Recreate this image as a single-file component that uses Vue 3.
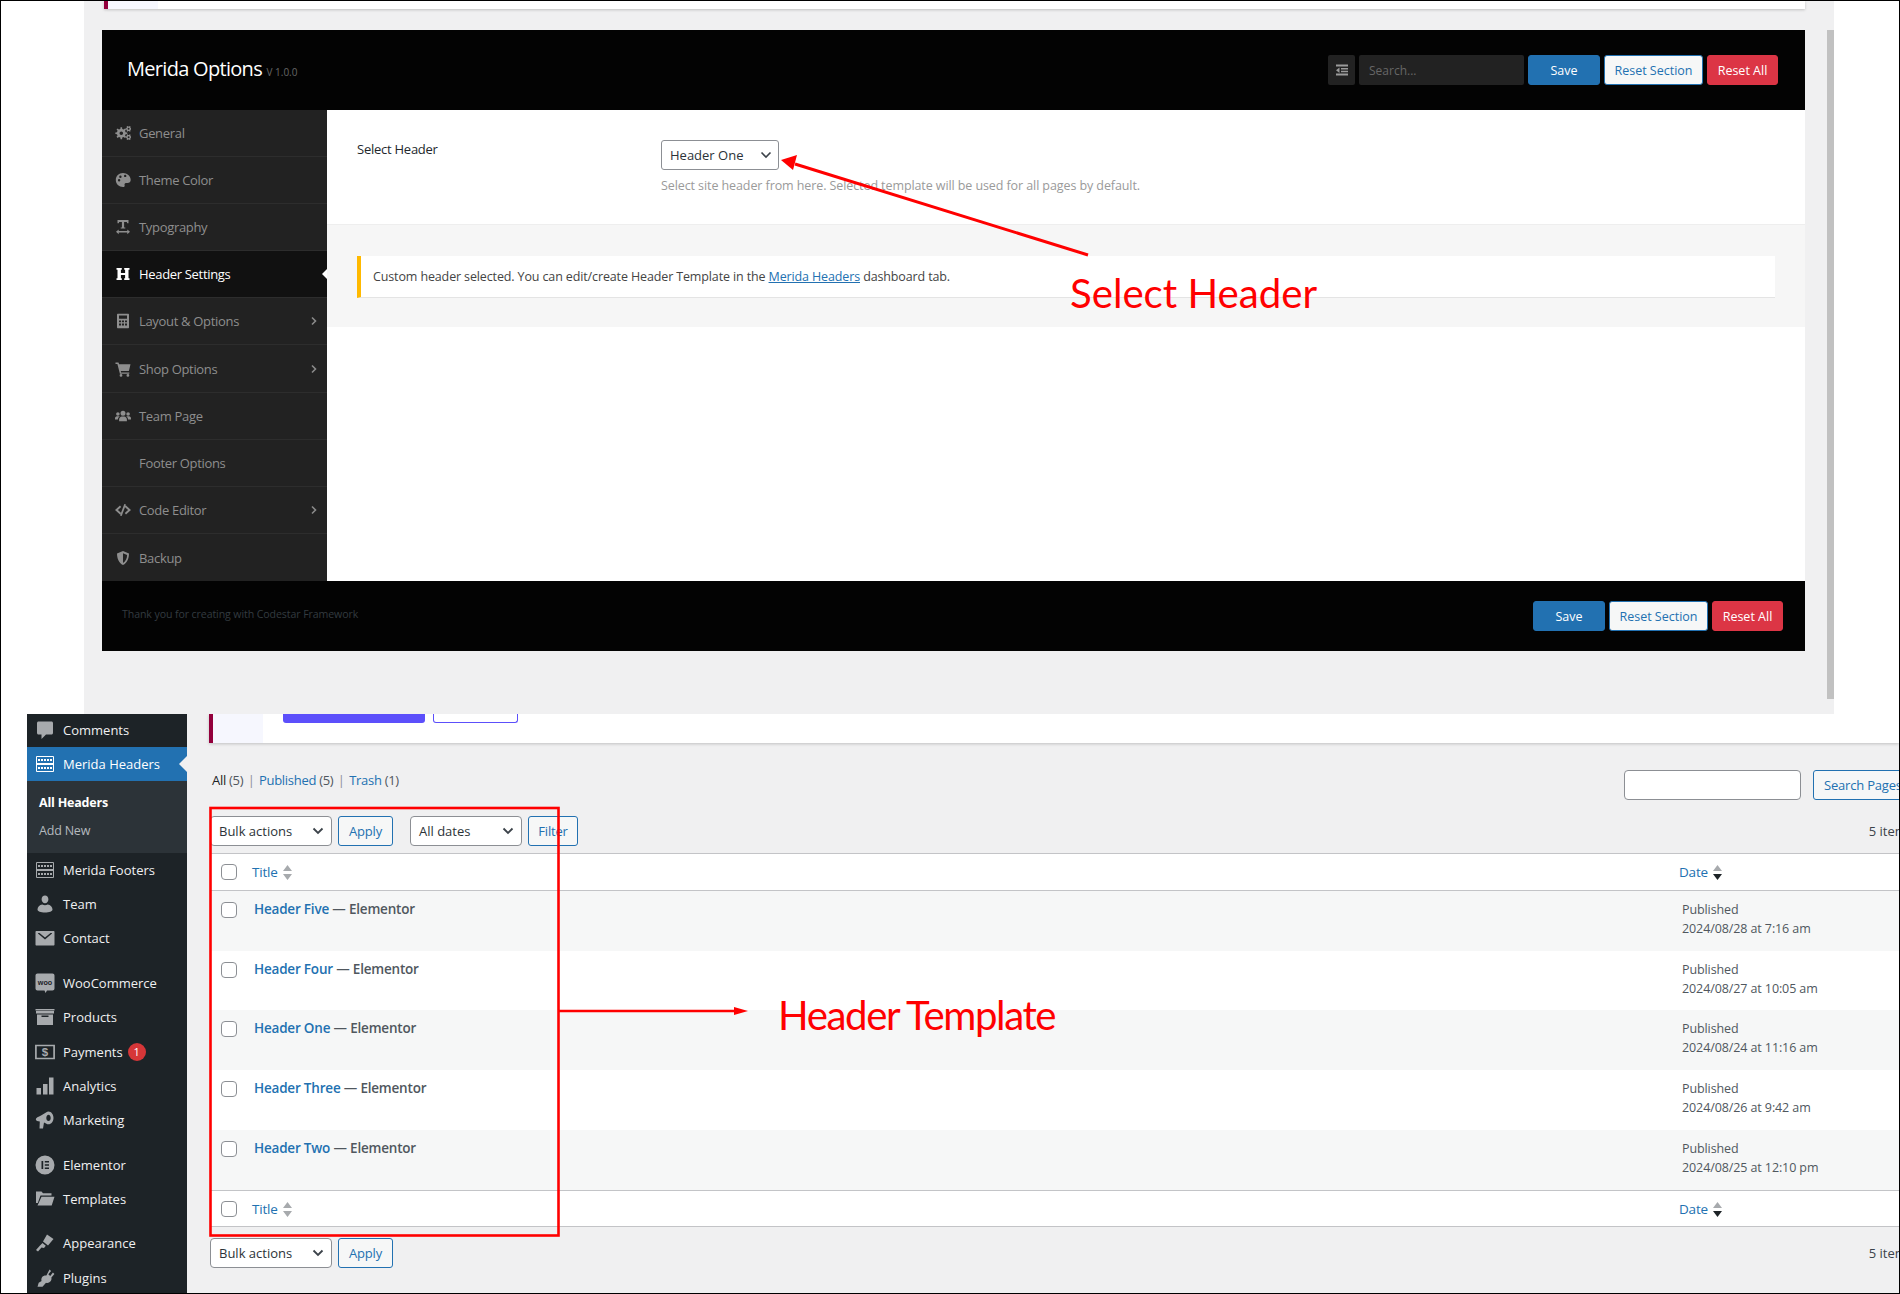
<script setup>
function gear(cx, cy, ro, ri, hole, n) {
  let d = ''
  for (let i = 0; i < n; i++) {
    const step = (Math.PI * 2) / n
    const a = i * step
    const pts = [[ri, a - step * 0.5], [ri, a - step * 0.27], [ro, a - step * 0.17], [ro, a + step * 0.17], [ri, a + step * 0.27]]
    for (const [r, t] of pts) {
      d += (d === '' ? 'M' : 'L') + (cx + r * Math.cos(t)).toFixed(2) + ' ' + (cy + r * Math.sin(t)).toFixed(2)
    }
  }
  d += `ZM${cx + hole} ${cy}a${hole} ${hole} 0 1 0 ${-2 * hole} 0a${hole} ${hole} 0 1 0 ${2 * hole} 0Z`
  return d
}
const p = (d) => `<path fill="currentColor" fill-rule="evenodd" d="${d}"/>`
const grid = `<path fill="none" stroke="currentColor" stroke-width="1" d="M1.500 2.500h17v15h-17z"/><path fill="none" stroke="currentColor" stroke-width="2" d="M1.500 10h17"/><path fill="none" stroke="currentColor" stroke-width="2" stroke-dasharray="2 1" d="M3 6h14.500M3 14h14.500"/>`

const panelIcons = {
  cogs: p(gear(6.3, 8.2, 6, 4.4, 1.8, 8)) + p(gear(13.6, 3.8, 3.1, 2.3, 0.95, 6)) + p(gear(13.6, 12.2, 3.1, 2.3, 0.95, 6)),
  palette: p('M8 1C3.800 1 .8 4.100 .8 8s3.100 7 7.300 7c1.300 0 1.900-1 1.500-2.100-.4-1 .3-2 1.300-2h1.700c1.700 0 3.100-1.300 3.100-3C15.700 4 12.100 1 8 1zM4.100 9.400a1.200 1.200 0 1 1 0-2.400 1.200 1.200 0 0 1 0 2.400zM5.400 5.900a1.200 1.200 0 1 1 0-2.400 1.200 1.200 0 0 1 0 2.400zm4.800-.8a1.200 1.200 0 1 1 0-2.400 1.200 1.200 0 0 1 0 2.400z'),
  type: p('M2.500 1h11v3.300h-1.300l-.4-1.400H9.100v5.500h1.200v1.200H5.700V8.400h1.200V2.900H4.200l-.4 1.400H2.500zM1 12.800l2.700-2.400v1.600h8.600v-1.600l2.700 2.400-2.700 2.400V13.600H3.700v1.600z'),
  head: p('M1.500 2h5.300v1.800H5.900v3.200h4.200V3.800h-.9V2h5.300v1.800h-1V12.200h1V14H9.200v-1.800h.9V8.900H5.900v3.300h.9V14H1.500v-1.800h1V3.800h-1z'),
  calc: p('M3 .8h10c.6 0 1 .4 1 1v12.400c0 .6-.4 1-1 1H3c-.6 0-1-.4-1-1V1.800c0-.6.4-1 1-1zM4 2.500v3.300h8V2.500zM4 7.400v1.900h2.100V7.400zm3 0v1.900h2V7.400zm3 0v1.900h2V7.400zM4 10.600v1.900h2.100v-1.900zm3 0v1.900h2v-1.900zm3 0v1.900h2v-1.900z'),
  cart: p('M.5 1.500h3l.6 1.800h11.400l-1.600 6.800H5.800l.3 1.300h8.200v1.400H4.900L2.400 2.900H.5zM6 13a1.400 1.400 0 1 1 0 2.800A1.400 1.400 0 0 1 6 13zm6.900 0a1.400 1.400 0 1 1 0 2.800 1.400 1.400 0 0 1 0-2.800z'),
  users: p('M8 2.800a2.500 2.500 0 1 1 0 5 2.500 2.500 0 0 1 0-5zM2.900 4.200a1.800 1.800 0 1 1 0 3.600 1.800 1.800 0 0 1 0-3.600zm10.200 0a1.800 1.800 0 1 1 0 3.600 1.800 1.800 0 0 1 0-3.600zM4.100 13.300v-1.800c0-1.800 1.400-3.100 2.700-3.100h2.400c1.300 0 2.700 1.300 2.700 3.100v1.800zM0 10.600C0 9.200.8 8.300 2 8.300h2c.2 0 .5.100.7.200-1.100.6-1.700 1.700-1.800 3H0zM16 10.600c0-1.400-.8-2.300-2-2.300h-2c-.2 0-.5.100-.7.200 1.100.6 1.700 1.700 1.800 3H16z'),
  code: p('M5 3.600L0 8l5 4.400 1.200-1.400L2.900 8 6.200 5zM11 3.600L16 8l-5 4.400L9.800 11l3.300-3-3.300-3zM9.300 2l1.700.4L6.700 14 5 13.600z'),
  shield: p('M8 1l6 2.400c0 5-1.800 9.300-6 11.600C3.800 12.700 2 8.400 2 3.400zM8 3.200v9.700c2.800-1.800 4-4.600 4.100-8z'),
}
const sideItems = [
  { name: 'General', icon: 'cogs' },
  { name: 'Theme Color', icon: 'palette' },
  { name: 'Typography', icon: 'type' },
  { name: 'Header Settings', icon: 'head', active: true },
  { name: 'Layout & Options', icon: 'calc', more: true },
  { name: 'Shop Options', icon: 'cart', more: true },
  { name: 'Team Page', icon: 'users' },
  { name: 'Footer Options', icon: '' },
  { name: 'Code Editor', icon: 'code', more: true },
  { name: 'Backup', icon: 'shield' },
]
const wpIcons = {
  comments: p('M3.500 1.500h13c.8 0 1.500.7 1.500 1.500v10c0 .8-.7 1.500-1.500 1.500H11l-4.500 4.500v-4.500h-3C2.700 14.500 2 13.800 2 13V3c0-.8.7-1.500 1.500-1.500z'),
  grid,
  team: p('M10 1.500c2 0 3.400 1.700 3.400 3.800s-1.400 4-3.400 4-3.400-1.900-3.400-4S8 1.500 10 1.500zM2.500 15.500c0-2.700 2-4.500 4.800-5 1.700.9 3.700.9 5.400 0 2.800.5 4.800 2.300 4.800 5 0 2-3.200 3-7.500 3s-7.500-1-7.500-3z'),
  mail: p('M1.500 3h17c.6 0 1 .4 1 1v12.500c0 .6-.4 1-1 1h-17c-.6 0-1-.4-1-1V4c0-.6.4-1 1-1zM3 5.500l7 6 7-6v-.5h-1.500L10 9.500 4.500 5H3z'),
  woo: `<path fill="currentColor" d="M2.500 .5h15c1.100 0 2 .9 2 2v13c0 1.100-.9 2-2 2H12l-1.500 2.500-1-2.500h-7c-1.100 0-2-.9-2-2v-13c0-1.100.9-2 2-2z"/><text x="10" y="11.800" text-anchor="middle" font-family="Liberation Sans, sans-serif" font-weight="700" font-size="7.200" fill="#1d2327">woo</text>`,
  box: p('M.5 2h19v1.500H.5zM1 4h18v2.500H1zM2 7.500h16V18H2zM6.500 8.500v1.500h7V8.500z'),
  pay: `<path fill="none" stroke="currentColor" stroke-width="1.700" d="M.9 3.500h18.200v13H.9z"/><text x="10" y="14.300" text-anchor="middle" font-family="Liberation Sans, sans-serif" font-weight="700" font-size="11.500" fill="currentColor">$</text>`,
  bars: p('M1.500 12h4.500v6.500H1.500zM8 8h4.500v10.500H8zM14 1.500h4.500v17H14z'),
  mega: p('M13.500 1.500c2.700 0 5 2.900 5 6.400s-2.300 6.300-5 6.300c-.8 0-1.600-.2-2.500-.8l-2 -1L8 18.500H4.500l.3-6.900C2.900 11.400.8 10.800.8 9.500c0-1.500 2.600-2.700 5.200-3.900L11 2.500c.9-.7 1.700-1 2.500-1zM13.500 4.800c-1.200 0-2.200 1.400-2.200 3.100s1 3.100 2.200 3.100 2.200-1.400 2.200-3.100-1-3.100-2.200-3.100z'),
  el: p('M10 .5a9.500 9.500 0 1 1 0 19 9.500 9.500 0 0 1 0-19zM6.500 6v8h1.700V6zM9.800 6v1.600h4.200V6zm0 3.200v1.600h4.200V9.200zm0 3.200V14h4.200v-1.600z'),
  folder: p('M1 2.500h5.500L8 4.300h8.500v2.200H5.500L2.800 14H1zM6.500 7.700h13l-2.800 8.800H2.500z'),
  brush: p('M12 1.500l6.500 4.500-5.500 6.500L8 8.500zM7.500 10l3.300 2.700L9 15l-2.500-.5L3 18.500 1 17l4-4.500z'),
  plug: p('M14.500 1.500l1.600 1.400-2.800 3.400 1.900 1.600 2.700-3.300 1.500 1.300-3 3.700c.3 1.600-.2 3-1.100 4-1 1.200-2.700 1.700-4.300 1.100L7.500 18.800H2.500l1.200-4 2.900-1.700c-.6-1.500-.2-3.100.8-4.300.8-1 2.200-1.600 4-1.300z'),
}
const wpTail = [
  { name: 'Merida Footers', icon: 'grid' },
  { name: 'Team', icon: 'team' },
  { name: 'Contact', icon: 'mail', gap: true },
  { name: 'WooCommerce', icon: 'woo' },
  { name: 'Products', icon: 'box' },
  { name: 'Payments', icon: 'pay', badge: '1' },
  { name: 'Analytics', icon: 'bars' },
  { name: 'Marketing', icon: 'mega', gap: true },
  { name: 'Elementor', icon: 'el' },
  { name: 'Templates', icon: 'folder', gap: true },
  { name: 'Appearance', icon: 'brush' },
  { name: 'Plugins', icon: 'plug' },
]
const rows = [
  { t: 'Header Five', d: '2024/08/28 at 7:16 am' },
  { t: 'Header Four', d: '2024/08/27 at 10:05 am' },
  { t: 'Header One', d: '2024/08/24 at 11:16 am' },
  { t: 'Header Three', d: '2024/08/26 at 9:42 am' },
  { t: 'Header Two', d: '2024/08/25 at 12:10 pm' },
]
</script>

<template>
  <div class="page">
    <section class="shot-top">
      <div class="gutter-top"></div>
      <div class="top-gray">
        <div class="top-main">
          <div class="strip"><i class="stripe"></i><i class="stripe-light"></i></div>
          <div class="panel">
            <header class="panel-head">
              <h1 class="panel-title">Merida Options <small>V 1.0.0</small></h1>
              <div class="actions">
                <span class="expand"><svg width="14" height="14" viewBox="0 0 14 14"><path fill="#9a9a9a" d="M1 1.500h12v2H1zM6 5h7v1.500H6zM6 7.700h7v1.500H6zM1 10.500h12v2H1zM4.500 4.500v5.500L1 7.200z"/></svg></span>
                <span class="search">Search...</span>
                <button class="btn save">Save</button>
                <button class="btn reset-sec">Reset Section</button>
                <button class="btn reset-all">Reset All</button>
              </div>
            </header>
            <div class="panel-body">
              <nav class="panel-nav">
                <a v-for="s in sideItems" :key="s.name" class="nav-item" :class="{ on: s.active }">
                  <span class="nav-ico"><svg v-if="s.icon" width="16" height="16" viewBox="0 0 16 16" v-html="panelIcons[s.icon]"></svg></span>
                  <span>{{ s.name }}</span>
                  <svg v-if="s.more" class="nav-more" width="6" height="10" viewBox="0 0 6 10"><path fill="none" stroke="#8a8a8a" stroke-width="1.600" d="M1 1.500L4.500 5 1 8.500"/></svg>
                </a>
              </nav>
              <div class="panel-content">
                <div class="field">
                  <div class="field-label">Select Header</div>
                  <div>
                    <div class="fake-select">Header One<svg width="12" height="8" viewBox="0 0 12 8"><path fill="none" stroke="#3c434a" stroke-width="1.600" d="M1.500 1.500L6 6l4.500-4.500"/></svg></div>
                    <p class="help">Select site header from here. Selected template will be used for all pages by default.</p>
                  </div>
                </div>
                <div class="notice-wrap">
                  <div class="notice">Custom header selected. You can edit/create Header Template in the <a>Merida Headers</a> dashboard tab.</div>
                </div>
              </div>
            </div>
            <footer class="panel-foot">
              <span class="thanks">Thank you for creating with Codestar Framework</span>
              <div class="actions">
                <button class="btn save">Save</button>
                <button class="btn reset-sec">Reset Section</button>
                <button class="btn reset-all">Reset All</button>
              </div>
            </footer>
          </div>
        </div>
        <div class="scrollbar"></div>
      </div>
    </section>

    <section class="shot-low">
      <div class="gutter-low"></div>
      <aside class="wp-menu">
        <a class="wp-item wp-first"><span class="wp-ico"><svg width="20" height="20" viewBox="0 0 20 20" v-html="wpIcons.comments"></svg></span>Comments</a>
        <a class="wp-item wp-current"><span class="wp-ico"><svg width="20" height="20" viewBox="0 0 20 20" v-html="wpIcons.grid"></svg></span>Merida Headers</a>
        <div class="wp-sub">
          <a class="sub-on">All Headers</a>
          <a>Add New</a>
        </div>
        <a v-for="w in wpTail" :key="w.name" class="wp-item" :class="{ 'wp-gap': w.gap }">
          <span class="wp-ico"><svg width="20" height="20" viewBox="0 0 20 20" v-html="wpIcons[w.icon]"></svg></span>{{ w.name }}
          <b v-if="w.badge" class="badge">{{ w.badge }}</b>
        </a>
      </aside>
      <main class="wp-main">
        <div class="promo">
          <i class="stripe"></i><i class="promo-light"></i>
          <span class="promo-btn solid"></span>
          <span class="promo-btn outline"></span>
        </div>
        <div class="wrap">
          <div class="views-row">
            <ul class="views">
              <li><b>All</b> <em>(5)</em></li><li class="sep">|</li>
              <li><a>Published</a> <em>(5)</em></li><li class="sep">|</li>
              <li><a>Trash</a> <em>(1)</em></li>
            </ul>
            <div class="search-box">
              <span class="wp-input"></span>
              <button class="wp-btn">Search Pages</button>
            </div>
          </div>
          <div class="tablenav">
            <span class="wp-select bulk">Bulk actions<svg width="12" height="8" viewBox="0 0 12 8"><path fill="none" stroke="#3c434a" stroke-width="1.800" d="M1.500 1.500L6 6l4.500-4.500"/></svg></span>
            <button class="wp-btn apply">Apply</button>
            <span class="wp-select dates">All dates<svg width="12" height="8" viewBox="0 0 12 8"><path fill="none" stroke="#3c434a" stroke-width="1.800" d="M1.500 1.500L6 6l4.500-4.500"/></svg></span>
            <button class="wp-btn filter">Filter</button>
            <span class="count">5 items</span>
          </div>
          <table class="list">
            <colgroup><col class="c1" /><col /><col class="c3" /></colgroup>
            <thead>
              <tr>
                <th><span class="cb"></span></th>
                <th><a>Title</a><svg class="sort" width="9" height="15" viewBox="0 0 9 15"><path fill="#a7aaad" d="M4.500 0L9 6H0zM4.500 15L0 9h9z"/></svg></th>
                <th class="dh"><a>Date</a><svg class="sort" width="9" height="15" viewBox="0 0 9 15"><path fill="#a7aaad" d="M4.500 0L9 6H0z"/><path fill="#1d2327" d="M4.500 15L0 9h9z"/></svg></th>
              </tr>
            </thead>
            <tbody>
              <tr v-for="r in rows" :key="r.t">
                <td><span class="cb"></span></td>
                <td class="tt"><a>{{ r.t }}</a> — Elementor</td>
                <td class="dd">Published<br />{{ r.d }}</td>
              </tr>
            </tbody>
            <tfoot>
              <tr>
                <th><span class="cb"></span></th>
                <th><a>Title</a><svg class="sort" width="9" height="15" viewBox="0 0 9 15"><path fill="#a7aaad" d="M4.500 0L9 6H0zM4.500 15L0 9h9z"/></svg></th>
                <th class="dh"><a>Date</a><svg class="sort" width="9" height="15" viewBox="0 0 9 15"><path fill="#a7aaad" d="M4.500 0L9 6H0z"/><path fill="#1d2327" d="M4.500 15L0 9h9z"/></svg></th>
              </tr>
            </tfoot>
          </table>
          <div class="tablenav nav-bottom">
            <span class="wp-select bulk">Bulk actions<svg width="12" height="8" viewBox="0 0 12 8"><path fill="none" stroke="#3c434a" stroke-width="1.800" d="M1.500 1.500L6 6l4.500-4.500"/></svg></span>
            <button class="wp-btn apply">Apply</button>
            <span class="count">5 items</span>
          </div>
        </div>
      </main>
    </section>

    <svg class="marks" width="1900" height="1294" viewBox="0 0 1900 1294">
      <path fill="none" stroke="#f00" stroke-width="3" d="M1088 255L795 164"/>
      <path fill="#f00" d="M781 160L797 155L793 170Z"/>
      <rect x="210.500" y="808" width="348" height="427.500" fill="none" stroke="#f00" stroke-width="2.600"/>
      <path fill="none" stroke="#f00" stroke-width="2.500" d="M559 1011H738"/>
      <path fill="#f00" d="M748 1011L734 1007V1015Z"/>
    </svg>
    <div class="note note-a">Select Header</div>
    <div class="note note-b">Header Template</div>
  </div>
</template>

<style>
html, body { margin: 0; padding: 0; background: #fff; }
</style>

<style scoped>
.page { position: relative; width: 1900px; height: 1294px; box-sizing: border-box; border: 1px solid #000; overflow: hidden; background: #fff; font-family: "Open Sans", "Noto Sans", sans-serif; font-size: 13px; color: #3c434a; }
.page * { box-sizing: border-box; }
a { text-decoration: none; }
.shot-top { display: flex; height: 713px; }
.gutter-top { width: 83px; flex: none; }
.top-gray { width: 1750px; flex: none; display: flex; background: #f0f0f1; }
.top-main { width: 1743px; flex: none; padding-left: 18px; }
.strip { display: flex; margin-left: 2px; width: 1701px; height: 8px; background: #fff; box-shadow: 0 1px 3px rgba(0,0,0,.2); }
.stripe { width: 4px; background: #93003c; display: block; flex: none; }
.stripe-light { width: 50px; background: #f6f7fe; display: block; }
.scrollbar { width: 7px; margin-top: 29px; height: 669px; background: #c1c1c1; }
.panel { width: 1703px; margin-top: 21px; }
.panel-head { height: 80px; background: #030303; display: flex; align-items: center; justify-content: space-between; padding: 0 27px 0 25px; }
.panel-title { margin: 0 0 3px; font-size: 20px; font-weight: 400; color: #fff; letter-spacing: -.7px; }
.panel-title small { font-size: 10px; color: #666; letter-spacing: 0; }
.actions { display: flex; gap: 4px; align-items: center; }
.expand { width: 27px; height: 30px; background: #222; border-radius: 2px; display: flex; align-items: center; justify-content: center; }
.search { width: 165px; height: 30px; background: #222; border-radius: 2px; color: #666; padding: 1px 10px 0; font-size: 12px; line-height: 30px; }
.btn { height: 30px; border-radius: 3px; font: inherit; font-size: 12.500px; padding: 0; border: 1px solid #2271b1; }
.btn.save { width: 72px; background: #2271b1; color: #fff; }
.btn.reset-sec { width: 99px; background: #f6f7f7; color: #2271b1; }
.btn.reset-all { width: 71px; background: #dc3545; border-color: #dc3545; color: #fff; }
.panel-body { display: flex; height: 471px; }
.panel-nav { width: 225px; flex: none; background: #222; display: flex; flex-direction: column; }
.nav-item { position: relative; height: 47.100px; display: flex; align-items: center; padding-left: 14px; color: #8e8e8e; border-bottom: 1px solid #2d2d2d; font-size: 13px; letter-spacing: -.32px; }
.nav-item:last-child { border-bottom: 0; padding-top: 2px; }
.nav-item.on { background: #111; color: #fff; }
.nav-item.on::after { content: ""; position: absolute; right: 0; top: 50%; margin-top: -5px; border: 5px solid transparent; border-left: 0; border-right-color: #fff; }
.nav-ico { width: 23px; flex: none; display: flex; margin-left: -1px; padding-right: 1px; }
.nav-ico + span { margin-left: 1px; }
.nav-more { margin-left: auto; margin-right: 10px; }
.panel-content { flex: 1; background: #fff; }
.field { height: 115px; display: flex; padding: 30px 0 0 30px; border-bottom: 1px solid #eee; }
.field-label { width: 304px; color: #23282d; font-size: 13px; letter-spacing: -.25px; line-height: 18px; }
.fake-select { width: 118px; height: 30px; border: 1px solid #8c8f94; border-radius: 3px; display: flex; align-items: center; justify-content: space-between; padding: 0 6px 0 8px; color: #2c3338; font-size: 13px; letter-spacing: 0; }
.help { margin: 7px 0 0; color: #9a9a9a; font-size: 12.500px; letter-spacing: -.09px; line-height: 18px; }
.notice-wrap { height: 102px; background: #f6f6f6; padding: 31px 30px 0 30px; }
.notice { height: 42px; background: #fff; border-left: 4px solid #ffb900; border-bottom: 1px solid #e4e4e4; padding-left: 12px; line-height: 42px; font-size: 12.500px; letter-spacing: -.13px; color: #444; }
.notice a { color: #2271b1; text-decoration: underline; }
.panel-foot { height: 70px; background: #030303; display: flex; align-items: center; justify-content: space-between; padding: 0 22px 0 20px; }
.thanks { color: #333b40; font-size: 10.600px; letter-spacing: -.1px; margin-bottom: 4px; }

.shot-low { display: flex; height: 579px; }
.gutter-low { width: 26px; flex: none; }
.wp-menu { width: 160px; flex: none; background: #1d2327; color: #f0f0f1; display: flex; flex-direction: column; }
.wp-item { height: 34.200px; display: flex; align-items: center; color: #f0f0f1; font-size: 13px; letter-spacing: 0; flex: none; }
.wp-first { height: 33px; padding-bottom: 2px; }
.wp-gap { margin-bottom: 10.500px; }
.wp-ico { width: 36px; padding-left: 8px; display: flex; color: #a7aaad; flex: none; }
.wp-current { background: #2271b1; color: #fff; position: relative; height: 34px; }
.wp-current .wp-ico { color: #fff; }
.wp-current::after { content: ""; position: absolute; right: 0; top: 50%; margin-top: -8px; border: 8px solid transparent; border-left: 0; border-right-color: #f0f0f1; }
.wp-sub { height: 72px; background: #2c3338; padding: 8px 0 0 12px; display: flex; flex-direction: column; flex: none; }
.wp-sub a { height: 28px; line-height: 28px; font-size: 12.500px; color: #b4b9be; letter-spacing: -.2px; }
.wp-sub .sub-on { color: #fff; font-weight: 700; }
.badge { width: 18px; height: 18px; margin-left: 5px; border-radius: 50%; background: #d63638; color: #fff; font-weight: 400; font-size: 11px; text-align: center; line-height: 18px; }

.wp-main { flex: 1; min-width: 0; background: #f0f0f1; overflow: hidden; }
.promo { margin-left: 22px; height: 29px; background: #fff; box-shadow: 0 1px 3px rgba(0,0,0,.2); display: flex; align-items: flex-start; }
.promo-light { width: 50px; height: 29px; background: #f6f7fe; display: block; }
.stripe { height: 100%; }
.promo-btn { display: block; height: 9px; border-radius: 0 0 3px 3px; }
.promo-btn.solid { width: 142px; margin-left: 20px; background: #5c4ffb; }
.promo-btn.outline { width: 85px; margin-left: 8px; border: 1px solid #5c4ffb; border-top: 0; background: #fff; }
.wrap { width: 1703px; margin-left: 23px; }
.views-row { display: flex; justify-content: space-between; margin-top: 27px; height: 30px; align-items: flex-start; }
.views { list-style: none; margin: 0; padding: 0 0 0 2px; display: flex; gap: 4.500px; font-size: 13px; line-height: 20px; letter-spacing: -.3px; }
.views b { font-weight: 400; color: #1d2327; }
.views em { font-style: normal; color: #50575e; }
.views a { color: #2271b1; }
.views .sep { color: #8c8f94; }
.search-box { display: flex; gap: 12px; }
.wp-input { width: 177px; height: 30px; background: #fff; border: 1px solid #8c8f94; border-radius: 4px; display: block; }
.wp-btn { height: 30px; border: 1px solid #2271b1; border-radius: 3px; background: #f6f7f7; color: #2271b1; font: inherit; font-size: 13px; letter-spacing: -.2px; padding: 0; }
.search-box .wp-btn { width: 100px; text-align: left; padding-left: 10px; white-space: nowrap; }
.tablenav { display: flex; margin-top: 16px; height: 30px; align-items: center; }
.wp-select { height: 30px; display: flex; justify-content: space-between; align-items: center; background: #fff; border: 1px solid #8c8f94; border-radius: 4px; padding: 0 7px 0 8px; color: #2c3338; font-size: 13px; letter-spacing: 0; }
.wp-select.bulk { width: 122px; }
.wp-select.dates { width: 112px; margin-left: 17px; }
.apply { width: 55px; margin-left: 6px; }
.filter { width: 50px; margin-left: 6px; }
.count { margin-left: auto; font-size: 13px; color: #3c434a; white-space: nowrap; }
.list { width: 100%; margin-top: 7px; border-collapse: separate; border-spacing: 0; table-layout: fixed; background: #fff; border-top: 1px solid #c3c4c7; border-bottom: 1px solid #c3c4c7; }
.c1 { width: 42px; }
.c3 { width: 234px; }
.list th { height: 37px; font-weight: 400; text-align: left; padding: 0; font-size: 13.500px; letter-spacing: -.2px; }
.list a { color: #2271b1; }
.list thead th { border-bottom: 1px solid #c3c4c7; }
.list tfoot th { border-top: 1px solid #c3c4c7; height: 36px; }
.list th:first-child, .list td:first-child { padding-left: 11px; }
.cb { display: block; width: 16px; height: 16px; background: #fff; border: 1px solid #8c8f94; border-radius: 4px; }
.sort { margin-left: 5px; vertical-align: -3px; }
.list tbody tr { height: 60px; }
.list tbody tr:nth-child(odd) td { background: #f6f7f7; }
.list tbody tr:nth-child(2) { height: 59px; }
.list td { vertical-align: top; padding: 0; }
.list td:first-child { padding-top: 11px; }
.tt { padding-top: 9px !important; padding-left: 2px !important; font-size: 13.500px; font-weight: 600; color: #50575e; letter-spacing: -.2px; }
.dd { padding-top: 9px !important; padding-left: 3px !important; font-size: 12.500px; line-height: 19px; color: #50575e; letter-spacing: -.1px; }
.nav-bottom { margin-top: 11px; }

.marks { position: absolute; left: -1px; top: -1px; pointer-events: none; }
.note { position: absolute; color: #f00; font-family: Lato, "Open Sans", sans-serif; font-size: 40.200px; line-height: 48px; white-space: nowrap; }
.note-a { left: 1069px; top: 268px; }
.note-b { left: 777px; top: 990px; letter-spacing: -1.400px; }
</style>
